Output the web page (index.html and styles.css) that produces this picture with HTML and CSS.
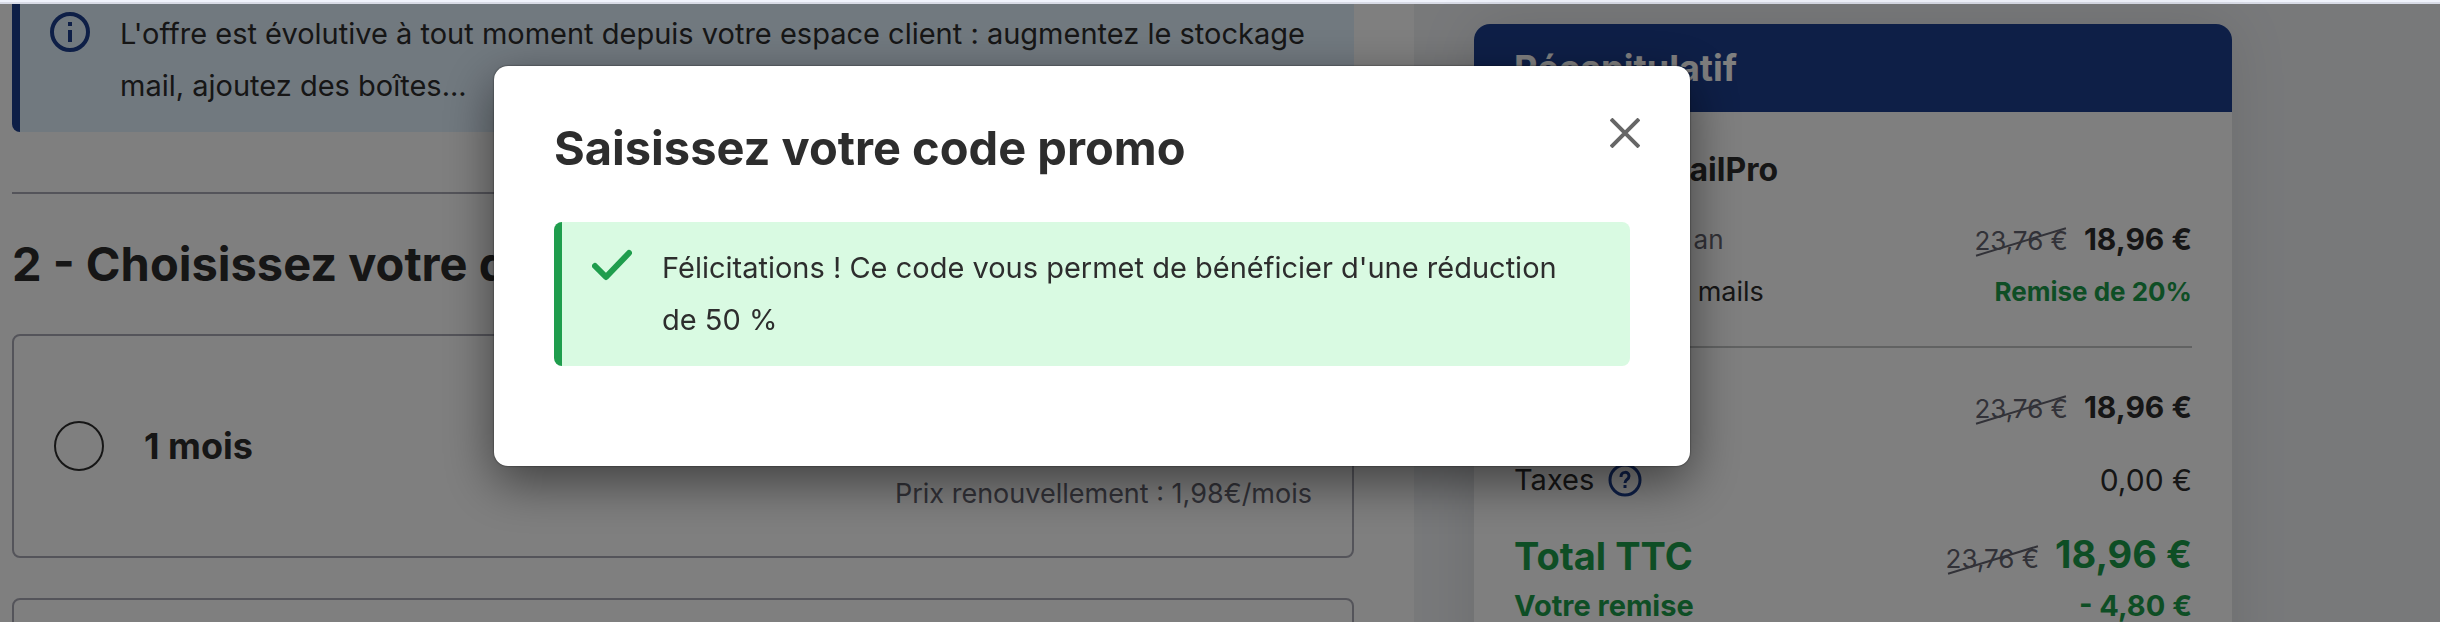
FILE: index.html
```html
<!DOCTYPE html>
<html lang="fr">
<head>
    <meta charset="UTF-8">
    <title>Commande EmailPro</title>
    <link rel="stylesheet" href="styles.css">
</head>
<body>
    <div class="topbar"></div>
    <div class="page">
        <main class="main">
            <div class="alert alert-info">
                <svg class="alert-icon" viewBox="0 0 40 40" fill="none" stroke="currentColor" stroke-width="4">
                    <circle cx="20" cy="20" r="18"/>
                    <path d="M20 10v4M20 18v12"/>
                </svg>
                <p>L'offre est évolutive à tout moment depuis votre espace client : augmentez le stockage mail, ajoutez des boîtes...</p>
            </div>
            <hr class="separator">
            <h2 class="title">2 - Choisissez votre durée</h2>
            <label class="option">
                <input type="radio" name="duree" value="1">
                <span class="option-name">1 mois</span>
                <span class="option-renew">Prix renouvellement : 1,98€/mois</span>
            </label>
            <label class="option">
                <input type="radio" name="duree" value="12" aria-label="1 an">
            </label>
        </main>

        <aside class="sidebar">
            <section class="recap">
                <h2 class="recap-header">Récapitulatif</h2>
                <div class="recap-body">
                    <h3 class="product">Service EmailPro</h3>
                    <div class="row">
                        <span class="muted">Souscription 1 an</span>
                        <span class="prices"><s class="old">23,76 €</s><strong>18,96 €</strong></span>
                    </div>
                    <div class="row">
                        <span class="detail">1x 5 adresses mails</span>
                        <strong class="discount">Remise de 20%</strong>
                    </div>
                    <hr class="recap-line">
                    <div class="row">
                        <span>Total HT</span>
                        <span class="prices"><s class="old">23,76 €</s><strong>18,96 €</strong></span>
                    </div>
                    <div class="row row-taxes">
                        <span class="taxes">Taxes
                            <button class="help" type="button" aria-label="Aide">
                                <svg viewBox="0 0 34 34" fill="none" stroke="currentColor" stroke-width="3">
                                    <circle cx="17" cy="17" r="15"/>
                                    <path d="M13 14c0-6 8-6 8-1 0 4-4 3-4 7M17 22v3"/>
                                </svg>
                            </button>
                        </span>
                        <span class="prices">0,00 €</span>
                    </div>
                    <div class="row row-total">
                        <strong>Total TTC</strong>
                        <span class="prices"><s class="old">23,76 €</s><strong>18,96 €</strong></span>
                    </div>
                    <div class="row row-discount">
                        <strong>Votre remise</strong>
                        <strong>- 4,80 €</strong>
                    </div>
                </div>
            </section>
        </aside>
    </div>

    <div class="overlay">
        <div class="modal" role="dialog" aria-labelledby="modal-title">
            <div class="modal-header">
                <h2 class="title" id="modal-title">Saisissez votre code promo</h2>
                <button class="close" type="button" aria-label="Fermer">
                    <svg viewBox="0 0 30 30" fill="none" stroke="currentColor" stroke-width="4">
                        <path d="M1 1l28 28M29 1L1 29"/>
                    </svg>
                </button>
            </div>
            <div class="alert alert-success">
                <svg class="alert-icon" viewBox="0 0 40 40" fill="none" stroke="currentColor" stroke-width="6" stroke-linecap="round" stroke-linejoin="round">
                    <path d="M3 20l11 11L37 7"/>
                </svg>
                <p>Félicitations ! Ce code vous permet de bénéficier d'une réduction de&nbsp;50&nbsp;%</p>
            </div>
        </div>
    </div>
</body>
</html>
```

FILE: styles.css
```css
* {
    box-sizing: border-box;
}
body {
    margin: 0;
    height: 100vh;
    overflow: hidden;
    font-family: Inter, "Open Sans", sans-serif;
    font-size: 29px;
    line-height: 52px;
    color: #2d2d2d;
    background: #f0f2f5;
}
h2, h3, p {
    margin: 0;
}
strong {
    font-weight: 700;
}
.topbar {
    height: 4px;
    background: #f0f3fc;
    border-bottom: 2px solid #d8dbe6;
}
.page {
    display: grid;
    grid-template-columns: 1fr 1026px;
}
.main {
    background: white;
    padding: 0 60px 0 12px;
}

/* Messages */
.alert {
    display: flex;
    gap: 30px;
    padding: 20px 20px 20px 30px;
    border-left: 8px solid;
    border-radius: 8px;
}
.alert p {
    color: #2d2d2d;
}
.alert-icon {
    width: 40px;
    height: 40px;
    margin-top: 4px;
    flex-shrink: 0;
}
.alert-info {
    padding-top: 4px;
    border-radius: 0 0 8px 8px;
    color: #1c3e8e;
    background: #e3f2ff;
}
.alert-success {
    color: #1f9d4d;
    background: #d9fae2;
}

/* Choix de la durée */
.separator {
    margin: 60px 0 40px;
    border: 0;
    border-top: 2px solid #a8a8b4;
}
.title {
    font-size: 47px;
    font-weight: 700;
    line-height: 60px;
}
.option {
    display: grid;
    grid-template-columns: 50px 1fr auto;
    gap: 40px;
    align-items: center;
    height: 224px;
    padding: 0 40px;
    margin: 40px 0;
    border: 2px solid #a8a8b4;
    border-radius: 8px;
}
.option input {
    appearance: none;
    width: 50px;
    height: 50px;
    margin: 0;
    border: 2px solid #2d2d2d;
    border-radius: 50%;
}
.option-name {
    font-size: 36px;
    font-weight: 700;
}
.option-renew {
    align-self: end;
    padding-bottom: 36px;
    font-size: 27px;
    color: #646470;
}

/* Récapitulatif */
.recap {
    width: 758px;
    margin: 20px 0 0 60px;
    border-radius: 16px;
    background: white;
    box-shadow: 0 0 60px rgba(0, 0, 0, 0.1);
}
.recap-header {
    padding: 18px 40px;
    border-radius: 16px 16px 0 0;
    font-size: 36px;
    font-weight: 700;
    color: white;
    background: #1c3e8e;
}
.recap-body {
    padding: 32px 40px 60px;
}
.product {
    margin-bottom: 18px;
    font-size: 32px;
    font-weight: 700;
}
.row {
    display: flex;
    justify-content: space-between;
    align-items: center;
    min-height: 52px;
}
.prices {
    display: flex;
    align-items: baseline;
    gap: 16px;
    font-size: 30px;
    line-height: 40px;
}
.old {
    position: relative;
    font-size: 26px;
    color: #646470;
    text-decoration: none;
}
.old::after {
    content: "";
    position: absolute;
    left: 0;
    top: 50%;
    width: 100%;
    border-top: 2px solid #646470;
    transform: rotate(-17deg);
}
.muted {
    font-size: 26px;
    color: #646470;
}
.detail {
    font-size: 27px;
}
.discount, .row-total, .row-discount {
    color: #1d9c4b;
}
.discount {
    font-size: 26px;
}
.recap-line {
    margin: 28px 0 34px;
    border: 0;
    border-top: 2px solid #c2c4c4;
}
.row-taxes {
    margin: 20px 0;
}
.taxes {
    display: flex;
    align-items: center;
    gap: 14px;
}
.help, .close {
    display: flex;
    padding: 0;
    border: 0;
    background: none;
    cursor: pointer;
}
.help {
    width: 34px;
    color: #1c3e8e;
}
.row-total {
    font-size: 38px;
    line-height: 60px;
}
.row-total .prices {
    font-size: 38px;
}
.row-discount {
    min-height: 40px;
    line-height: 40px;
}

/* Fenêtre code promo */
.overlay {
    position: fixed;
    inset: 4px 0 0 0;
    display: flex;
    justify-content: center;
    align-items: flex-start;
    padding: 62px 256px 0 0;
    background: rgba(0, 0, 0, 0.5);
}
.modal {
    width: 1196px;
    padding: 52px 60px 100px;
    border-radius: 14px;
    background: white;
    box-shadow: 0 0 2px rgba(0, 0, 0, 0.7), 0 16px 50px rgba(0, 0, 0, 0.5);
}
.modal-header {
    display: flex;
    justify-content: space-between;
    align-items: flex-start;
    margin-bottom: 44px;
}
.close {
    width: 30px;
    margin-right: -10px;
    color: #666;
}
```
